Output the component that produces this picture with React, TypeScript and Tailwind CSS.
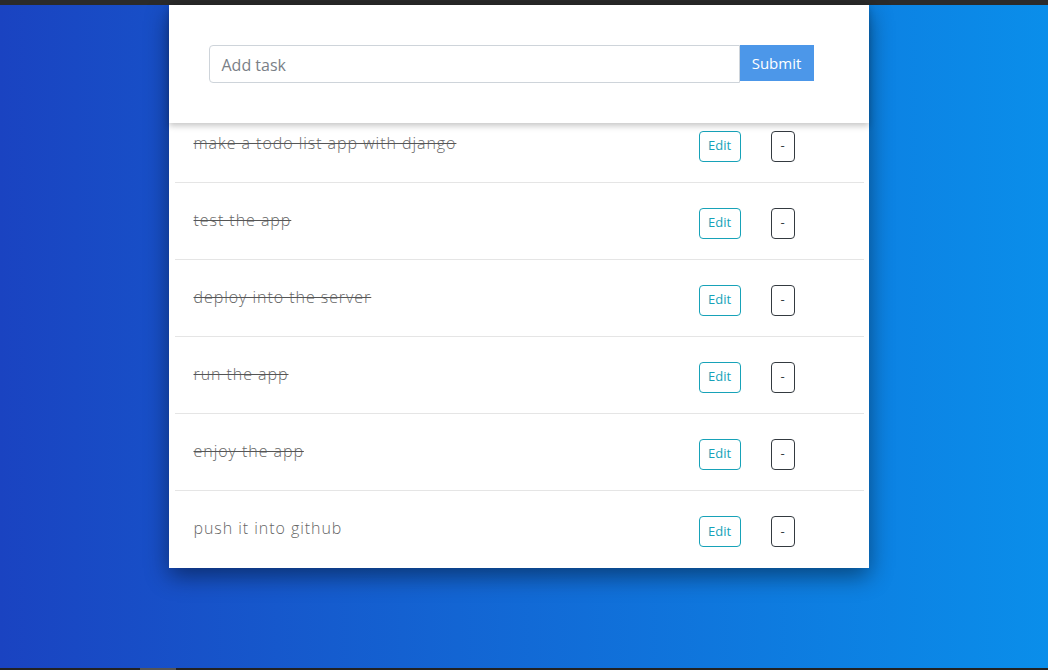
import React from "react";

const tasks = [
  { title: "make a todo list app with django", done: true },
  { title: "test the app", done: true },
  { title: "deploy into the server", done: true },
  { title: "run the app", done: true },
  { title: "enjoy the app", done: true },
  { title: "push it into github", done: false },
];

export default function App() {
  return (
    <div className="w-[1048px] h-[670px] flex flex-col overflow-hidden" style={{ fontFamily: '"Open Sans", "Noto Sans", sans-serif' }}>
      <div className="h-[5px] bg-[#2b2b2b] shrink-0" />
      <div className="flex-1 bg-gradient-to-r from-[#1a43c1] to-[#0a8eea] flex justify-center">
        <div className="ml-[-11px] w-[700px] h-[563px] bg-white flex flex-col shadow-[0_8px_22px_rgba(0,0,0,0.45)]">
          <div className="relative z-10 h-[118px] shrink-0 bg-white pt-[40px] pl-[40px] shadow-[0_3px_6px_rgba(0,0,0,0.22)]">
            <div className="flex items-start">
              <div className="w-[531px] h-[38px] border border-[#ced4da] rounded-l-[4px] flex items-center px-[12px] pt-[1px] text-[16px] text-[#7a8087]">
                Add task
              </div>
              <button className="w-[74px] h-[36px] bg-[#4c97e9] text-white text-[15px] flex items-center justify-center">
                Submit
              </button>
            </div>
          </div>
          <div className="mt-[-17px] pl-[6px] pr-[5px] flex flex-col">
            {tasks.map((t, i) => (
              <div
                key={i}
                className={`h-[77px] flex items-center pl-[19px] ${i < tasks.length - 1 ? "border-b border-[#e5e5e5]" : ""}`}
              >
                <span
                  className={`flex-1 mb-[3px] text-[16px] font-light text-[#666] ${t.done ? "line-through decoration-[#555]" : ""}`}
                  style={{ letterSpacing: "0.95px" }}
                >
                  {t.title}
                </span>
                <div className="mt-[4px] w-[42px] h-[31px] border border-[#17a2b8] rounded-[4px] text-[#17a2b8] text-[13px] flex items-center justify-center">
                  Edit
                </div>
                <div className="mt-[4px] ml-[30px] mr-[69px] w-[24px] h-[31px] border border-[#343a40] rounded-[4px] text-[#343a40] text-[13px] flex items-center justify-center">
                  -
                </div>
              </div>
            ))}
          </div>
        </div>
      </div>
      <div className="h-[2px] bg-[#222] shrink-0 flex">
        <div className="ml-[140px] w-[36px] bg-[#555]" />
      </div>
    </div>
  );
}
